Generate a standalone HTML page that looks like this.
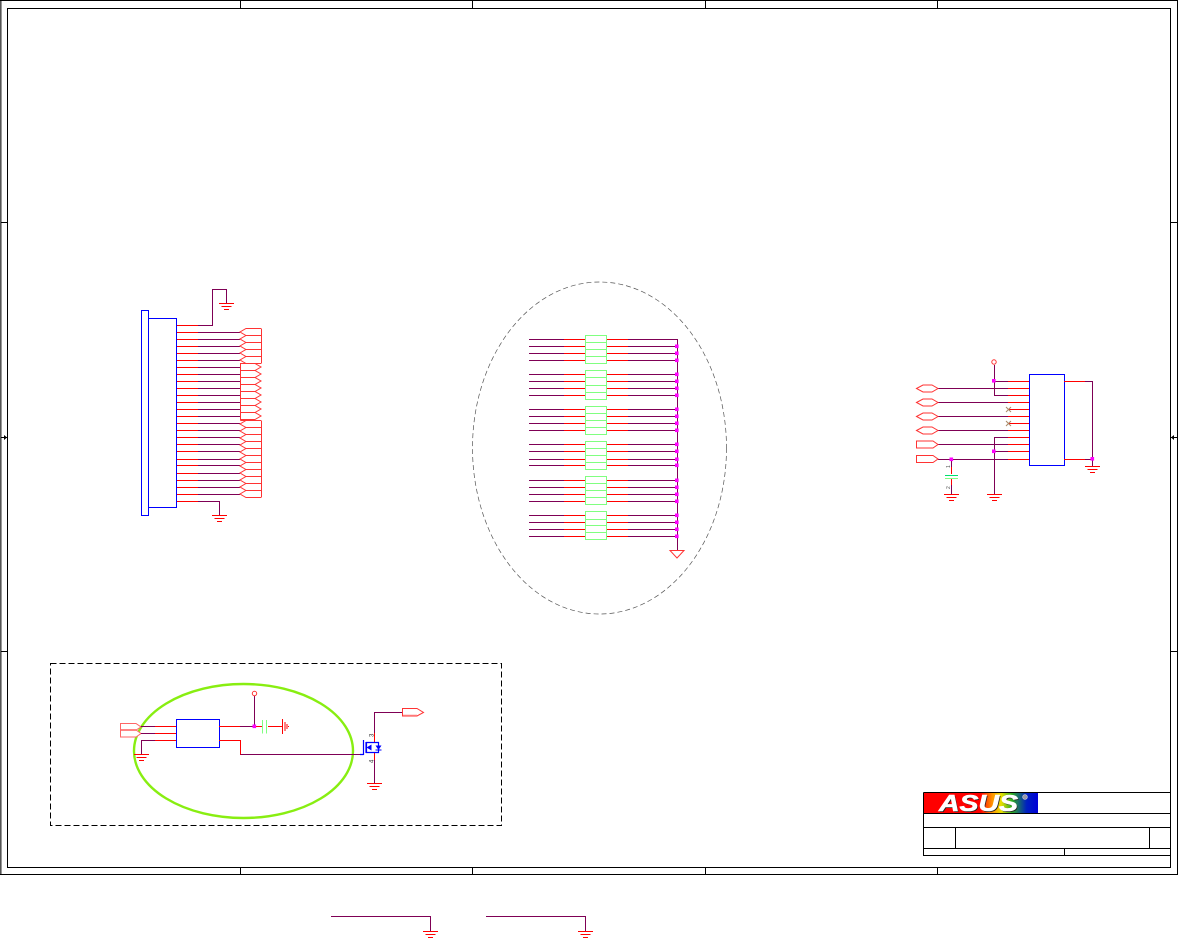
<!DOCTYPE html>
<html>
<head>
<meta charset="utf-8">
<title>Schematic</title>
<style>
html,body{margin:0;padding:0;background:#fff;width:1178px;height:938px;overflow:hidden}
svg{display:block}
text{font-family:"Liberation Sans",sans-serif}
</style>
</head>
<body>
<svg width="1178" height="938" viewBox="0 0 1178 938" xmlns="http://www.w3.org/2000/svg">
<defs>
<linearGradient id="lg" gradientUnits="userSpaceOnUse" x1="923" y1="0" x2="1038" y2="0">
<stop offset="0" stop-color="#f00"/><stop offset=".5" stop-color="#f00"/><stop offset=".6" stop-color="#ff9000"/><stop offset=".68" stop-color="#e8e000"/><stop offset=".77" stop-color="#30b020"/><stop offset=".9" stop-color="#0020c0"/><stop offset="1" stop-color="#0000d8"/>
</linearGradient>
<path id="g" d="M-7.5 0H7.5M-5 3H5M-2.5 6H2.5" fill="none" stroke="#f00"/>
<path id="cl" d="M261-3.5H246L240 0L246 3.5H261" fill="none" stroke="#f33"/>
<path id="cr" d="M240-3.5H255L261 0L255 3.5H240" fill="none" stroke="#f33"/>
<path id="hx" d="M916.5 0L923-3.5H932L938 0L932 3.5H923Z" fill="#fff" stroke="#f33"/>
<path id="pr" d="M916.5-3.5H933L938 0L933 3.5H916.5Z" fill="#fff" stroke="#f33"/>
<rect id="d" x="-2" y="-2" width="3.6" height="3.6" fill="#f0f"/>
<g id="row"><path d="M529 0H564M628 0H677" stroke="#7f0055" fill="none"/><path d="M564 0H585M607 0H628" stroke="#f00" fill="none"/></g>
<g id="lp"><path d="M177 0H198" stroke="#f00" fill="none"/><path d="M198 0H240" stroke="#7f0055" fill="none"/></g>
<g id="rp"><path d="M938 0H1008" stroke="#7f0055" fill="none"/><path d="M1008 0H1029" stroke="#f00" fill="none"/></g>
</defs>

<!-- frame -->
<rect x="0" y="0" width="1.6" height="874" fill="#555"/>
<path d="M0 .5H1177.5V874.5H0M7.5 8.5H1170.5V867.5H7.5Z" fill="none" stroke="#000"/>
<path d="M240.5 0V8M472.5 0V8M705.5 0V8M937.5 0V8M240.5 867V874M472.5 867V874M705.5 867V874M937.5 867V874M1 222.5H7M1 651.5H7M1171 222.5H1177M1171 651.5H1177M1 437.5H7M1171 437.5H1177" fill="none" stroke="#000"/>
<path d="M4 435V440L7 437.5ZM1174 435V440L1171 437.5Z" fill="#000"/>

<!-- left connector -->
<path d="M141.5 310.5H148.5V515.5H141.5ZM148.5 318.5H176.5V507.5H148.5Z" fill="none" stroke="#00f"/>
<path d="M177 325.5H198" stroke="#f00"/>
<path d="M198 325.5H212.5V289.5H226.5V303" fill="none" stroke="#7f0055"/>
<use href="#g" x="226.5" y="303.5"/>
<use href="#lp" y="332.5"/><use href="#lp" y="339.5"/><use href="#lp" y="346.5"/><use href="#lp" y="353.5"/><use href="#lp" y="360.5"/>
<use href="#lp" y="367.5"/><use href="#lp" y="374.5"/><use href="#lp" y="381.5"/><use href="#lp" y="388.5"/><use href="#lp" y="395.5"/><use href="#lp" y="402.5"/><use href="#lp" y="409.5"/><use href="#lp" y="416.5"/>
<use href="#lp" y="423.5"/><use href="#lp" y="430.5"/><use href="#lp" y="437.5"/><use href="#lp" y="444.5"/><use href="#lp" y="451.5"/><use href="#lp" y="459.5"/><use href="#lp" y="465.5"/><use href="#lp" y="473.5"/><use href="#lp" y="480.5"/><use href="#lp" y="487.5"/><use href="#lp" y="494.5"/>
<use href="#cl" y="332"/><use href="#cl" y="339"/><use href="#cl" y="346"/><use href="#cl" y="353"/><use href="#cl" y="360"/>
<use href="#cr" y="367"/><use href="#cr" y="374"/><use href="#cr" y="381"/><use href="#cr" y="388"/><use href="#cr" y="395"/><use href="#cr" y="402"/><use href="#cr" y="409"/><use href="#cr" y="416"/>
<use href="#cl" y="424"/><use href="#cl" y="431"/><use href="#cl" y="438"/><use href="#cl" y="445"/><use href="#cl" y="452"/><use href="#cl" y="459"/><use href="#cl" y="466"/><use href="#cl" y="473"/><use href="#cl" y="480"/><use href="#cl" y="487"/><use href="#cl" y="494"/>
<path d="M261.5 328.5V363.5M240.5 363.5V420.5M261.5 420.5V497.5M240.5 363.5H261M240.5 420.5H261" fill="none" stroke="#f33"/>
<path d="M177 501.5H198" stroke="#f00"/>
<path d="M198 501.5H219.5V515" fill="none" stroke="#7f0055"/>
<use href="#g" x="219.5" y="515.5"/>

<!-- middle resistor packs -->
<ellipse cx="599.5" cy="448" rx="127" ry="166" fill="none" stroke="#555" stroke-width=".7" stroke-dasharray="5 3"/>
<use href="#row" y="339.5"/><use href="#row" y="346.5"/><use href="#row" y="353.5"/><use href="#row" y="360.5"/>
<use href="#row" y="374.5"/><use href="#row" y="381.5"/><use href="#row" y="388.5"/><use href="#row" y="395.5"/>
<use href="#row" y="409.5"/><use href="#row" y="416.5"/><use href="#row" y="423.5"/><use href="#row" y="430.5"/>
<use href="#row" y="444.5"/><use href="#row" y="451.5"/><use href="#row" y="459.5"/><use href="#row" y="465.5"/>
<use href="#row" y="480.5"/><use href="#row" y="487.5"/><use href="#row" y="494.5"/><use href="#row" y="501.5"/>
<use href="#row" y="515.5"/><use href="#row" y="522.5"/><use href="#row" y="529.5"/><use href="#row" y="536.5"/>
<path d="M585.5 335.5H606.5V363.5H585.5ZM585.5 342.5H606.5M585.5 349.5H606.5M585.5 356.5H606.5
M585.5 370.5H606.5V399.5H585.5ZM585.5 377.5H606.5M585.5 385.5H606.5M585.5 392.5H606.5
M585.5 406.5H606.5V434.5H585.5ZM585.5 413.5H606.5M585.5 420.5H606.5M585.5 427.5H606.5
M585.5 441.5H606.5V469.5H585.5ZM585.5 448.5H606.5M585.5 455.5H606.5M585.5 462.5H606.5
M585.5 476.5H606.5V504.5H585.5ZM585.5 483.5H606.5M585.5 490.5H606.5M585.5 497.5H606.5
M585.5 511.5H606.5V539.5H585.5ZM585.5 519.5H606.5M585.5 525.5H606.5M585.5 532.5H606.5" fill="none" stroke="#80ff80"/>
<path d="M677.5 339V550" fill="none" stroke="#7f0055"/>
<path d="M670 550.5H684L677 558Z" fill="none" stroke="#f33"/>
<g>
<use href="#d" x="677" y="346.5"/><use href="#d" x="677" y="353.5"/><use href="#d" x="677" y="360.5"/>
<use href="#d" x="677" y="374.5"/><use href="#d" x="677" y="381.5"/><use href="#d" x="677" y="388.5"/><use href="#d" x="677" y="395.5"/>
<use href="#d" x="677" y="409.5"/><use href="#d" x="677" y="416.5"/><use href="#d" x="677" y="423.5"/><use href="#d" x="677" y="430.5"/>
<use href="#d" x="677" y="444.5"/><use href="#d" x="677" y="451.5"/><use href="#d" x="677" y="459.5"/><use href="#d" x="677" y="465.5"/>
<use href="#d" x="677" y="480.5"/><use href="#d" x="677" y="487.5"/><use href="#d" x="677" y="494.5"/><use href="#d" x="677" y="501.5"/>
<use href="#d" x="677" y="515.5"/><use href="#d" x="677" y="522.5"/><use href="#d" x="677" y="529.5"/><use href="#d" x="677" y="536.5"/>
</g>

<!-- right component -->
<rect x="1029.5" y="374.5" width="35" height="91" fill="none" stroke="#00f" stroke-width="1"/>
<circle cx="994" cy="362" r="2.2" fill="none" stroke="#f33"/>
<path d="M994.5 365V395.5H1008M994.5 381.5H1008M994.5 494V437.5H1008M994.5 451.5H1008M1085 381.5H1092.5V466M1085 459.5H1092.5" fill="none" stroke="#7f0055"/>
<path d="M1008 381.5H1029M1008 395.5H1029M1008 437.5H1029M1008 451.5H1029M1008 409.5H1029M1008 423.5H1029M1064 381.5H1085M1064 459.5H1085" fill="none" stroke="#f00"/>
<path d="M1006 407L1011 412M1011 407L1006 412M1006 421L1011 426M1011 421L1006 426" fill="none" stroke="#a86"/>
<use href="#rp" y="388.5"/><use href="#rp" y="402.5"/><use href="#rp" y="416.5"/><use href="#rp" y="430.5"/><use href="#rp" y="444.5"/><use href="#rp" y="459.5"/>
<use href="#hx" y="388.5"/><use href="#hx" y="402.5"/><use href="#hx" y="416.5"/><use href="#hx" y="430.5"/><use href="#pr" y="444.5"/><use href="#pr" y="459"/>
<path d="M951.5 459.5V474M951.5 479V494" fill="none" stroke="#7f0055"/>
<path d="M951.5 474V467M951.5 479V485" fill="none" stroke="#f00"/>
<path d="M945 475.5H958" stroke="#00e070" fill="none"/>
<path d="M945 478.5H958" stroke="#80ff80" fill="none"/>
<text x="0" y="0" font-size="5" fill="#555" transform="translate(950,468) rotate(-90)">1</text>
<text x="0" y="0" font-size="5" fill="#555" transform="translate(950,489) rotate(-90)">2</text>
<use href="#g" x="951.5" y="494.5"/><use href="#g" x="994.5" y="494.5"/><use href="#g" x="1092.5" y="466.5"/>
<use href="#d" x="994" y="381"/><use href="#d" x="994" y="451.5"/><use href="#d" x="951.5" y="459.5"/><use href="#d" x="1092.5" y="459"/>

<!-- lower dashed box -->
<rect x="50.5" y="663.5" width="451" height="162" fill="none" stroke="#000" stroke-dasharray="6 3"/>
<ellipse cx="243.5" cy="751" rx="109.5" ry="67" fill="none" stroke="#88ee11" stroke-width="2.4"/>
<rect x="176.5" y="719.5" width="43" height="28" fill="none" stroke="#00f"/>
<path d="M120.5 723.5H136L141 727L136 730H120.5ZM120.5 730H136L141 733.5L136 737H120.5Z" fill="#fff" stroke="#f66"/>
<path d="M120.5 730H136" stroke="#f66" stroke-width="1.6" fill="none"/>
<path d="M141 726.5H155M141 733.5H155M155 740.5H141.5V754M240 726.5H254.5M240 754.5H360M254.5 696V726" fill="none" stroke="#7f0055"/>
<path d="M155 726.5H176M155 733.5H176M155 740.5H176M219 726.5H240M219 740.5H240.5V754.5M255 726.5H262M268 726.5H282" fill="none" stroke="#f00"/>
<path d="M262.5 720V733.5M266.5 720V733.5" fill="none" stroke="#80ff80"/>
<circle cx="254.5" cy="693.5" r="2.2" fill="none" stroke="#f33"/>
<use href="#d" x="254.5" y="726.5"/>
<use href="#g" x="141.5" y="754.5"/>
<path d="M282.5 719V734M285 722V731M287 724V729M288.5 726V727" fill="none" stroke="#f00"/>

<!-- mosfet -->
<path d="M374.5 733V712.5H402M374.5 760V783" fill="none" stroke="#7f0055"/>
<path d="M374.5 733V742M374.5 752V760" fill="none" stroke="#f00"/>
<path d="M360 754.5H363.5M363.5 740V755M366.5 742.5H378.5V752.5H366.5ZM366 742V753" fill="none" stroke="#00f" stroke-width="1.2"/>
<path d="M366.5 747.5L371.5 744.5V750.5ZM375.5 745.5H381.5L378.5 750Z" fill="#00f"/>
<path d="M375.5 750H381.5" stroke="#00f" fill="none"/>
<path d="M402.5 708.5H417L423.5 712.5L417 716H402.5Z" fill="#fff" stroke="#f33"/>
<path d="M403 715H417" stroke="#fbb" fill="none"/>
<text font-size="6" fill="#333" transform="translate(373.5,737) rotate(-90)">3</text>
<text font-size="6" fill="#333" transform="translate(373.5,763) rotate(-90)">4</text>
<use href="#g" x="374.5" y="783.5"/>

<!-- title block -->
<rect x="923" y="793" width="115" height="20" fill="url(#lg)"/>
<text x="940" y="812" font-size="23" font-weight="bold" font-style="italic" fill="#222" textLength="79" lengthAdjust="spacingAndGlyphs">ASUS</text>
<text x="939" y="811" font-size="23" font-weight="bold" font-style="italic" fill="#fff" stroke="#fff" stroke-width=".6" textLength="79" lengthAdjust="spacingAndGlyphs">ASUS</text>
<circle cx="1025" cy="797" r="2.4" fill="#99a" stroke="#ccd" stroke-width=".6"/>
<path d="M923.5 792.5H1170M923.5 792.5V855.5H1170M923.5 813.5H1170M923.5 827.5H1170M923.5 848.5H1170M955.5 827.5V848.5M1149.5 827.5V848.5M1064.5 848.5V855.5" fill="none" stroke="#000"/>

<!-- below frame -->
<path d="M331 916.5H430.5V931M486 916.5H585.5V931" fill="none" stroke="#7f0055"/>
<use href="#g" x="430.5" y="931.5"/><use href="#g" x="585.5" y="931.5"/>
</svg>
</body>
</html>
